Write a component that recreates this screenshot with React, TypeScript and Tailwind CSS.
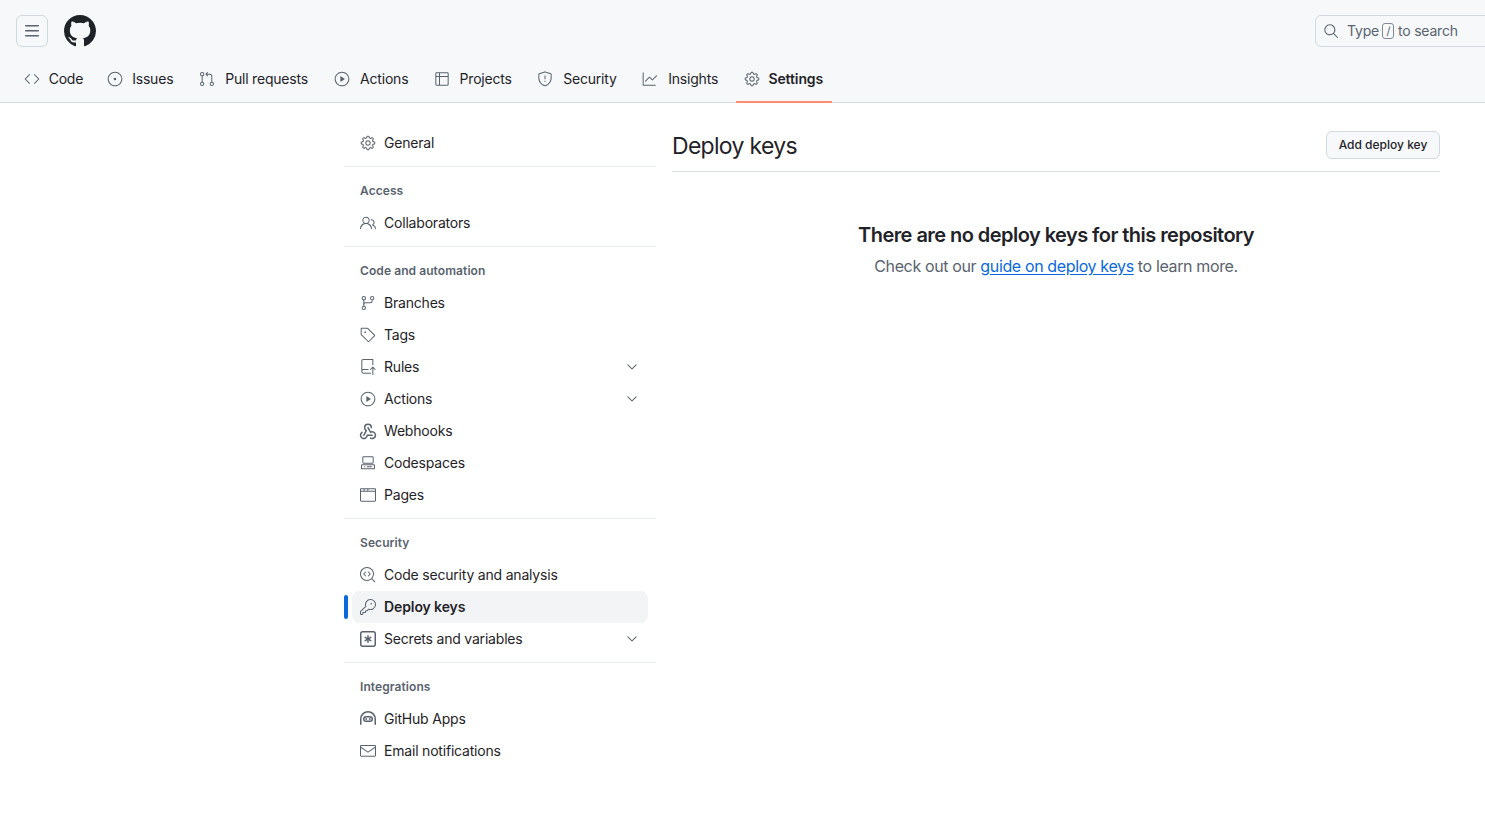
import type { ComponentType } from 'react';
import {
  GoBrowser,
  GoChevronDown,
  GoCode,
  GoCodescan,
  GoCodespaces,
  GoGear,
  GoGitBranch,
  GoGitPullRequest,
  GoGraph,
  GoIssueOpened,
  GoKey,
  GoMail,
  GoPeople,
  GoPlay,
  GoRepoPush,
  GoSearch,
  GoShield,
  GoTable,
  GoTag,
} from 'react-icons/go';
import { TbWebhook } from 'react-icons/tb';

type IconProps = { size?: number; className?: string };
type Icon = ComponentType<IconProps>;

type NavItem = { label: string; icon: Icon; chevron?: boolean; active?: boolean };
type NavGroup = { heading?: string; items: NavItem[] };

function MarkGithub({ size = 16, className }: IconProps) {
  return (
    <svg width={size} height={size} viewBox="0 0 16 16" fill="currentColor" className={className}>
      <path d="M8 0c4.42 0 8 3.58 8 8a8.013 8.013 0 0 1-5.45 7.59c-.4.08-.55-.17-.55-.38 0-.27.01-1.13.01-2.2 0-.75-.25-1.23-.54-1.48 1.78-.2 3.65-.88 3.65-3.95 0-.88-.31-1.59-.82-2.15.08-.2.36-1.02-.08-2.12 0 0-.67-.22-2.2.82-.64-.18-1.32-.27-2-.27-.68 0-1.36.09-2 .27-1.53-1.03-2.2-.82-2.2-.82-.44 1.1-.16 1.92-.08 2.12-.51.56-.82 1.28-.82 2.15 0 3.06 1.86 3.75 3.64 3.95-.23.2-.44.55-.51 1.07-.46.21-1.61.55-2.33-.66-.15-.24-.6-.83-1.23-.82-.67.01-.27.38.01.53.34.19.73.9.82 1.13.16.45.68 1.31 2.69.94 0 .67.01 1.3.01 1.49 0 .21-.15.45-.55.38A7.995 7.995 0 0 1 0 8c0-4.42 3.58-8 8-8Z" />
    </svg>
  );
}

function ThreeBars({ size = 16, className }: IconProps) {
  return (
    <svg width={size} height={size} viewBox="0 0 16 16" fill="currentColor" className={className}>
      <path d="M1 2.75A.75.75 0 0 1 1.75 2h12.5a.75.75 0 0 1 0 1.5H1.75A.75.75 0 0 1 1 2.75Zm0 5A.75.75 0 0 1 1.75 7h12.5a.75.75 0 0 1 0 1.5H1.75A.75.75 0 0 1 1 7.75ZM1.75 12h12.5a.75.75 0 0 1 0 1.5H1.75a.75.75 0 0 1 0-1.5Z" />
    </svg>
  );
}

function KeyAsterisk({ size = 16, className }: IconProps) {
  return (
    <svg width={size} height={size} viewBox="0 0 16 16" fill="currentColor" className={className}>
      <path d="M0 2.75A2.75 2.75 0 0 1 2.75 0h10.5A2.75 2.75 0 0 1 16 2.75v10.5A2.75 2.75 0 0 1 13.25 16H2.75A2.75 2.75 0 0 1 0 13.25ZM2.75 1.5c-.69 0-1.25.56-1.25 1.25v10.5c0 .69.56 1.25 1.25 1.25h10.5c.69 0 1.25-.56 1.25-1.25V2.75c0-.69-.56-1.25-1.25-1.25Z" />
      <path d="M8 4a.75.75 0 0 1 .75.75V6.7l1.69-.975a.75.75 0 0 1 .75 1.3L9.5 8l1.69.976a.75.75 0 0 1-.75 1.298L8.75 9.3v1.951a.75.75 0 0 1-1.5 0V9.299l-1.69.976a.75.75 0 0 1-.75-1.3L6.5 8l-1.69-.975a.75.75 0 0 1 .75-1.3l1.69.976V4.75A.75.75 0 0 1 8 4Z" />
    </svg>
  );
}

function Hubot({ size = 16, className }: IconProps) {
  return (
    <svg width={size} height={size} viewBox="0 0 16 16" fill="currentColor" className={className}>
      <path d="M0 8a8 8 0 1 1 16 0v5.25a.75.75 0 0 1-1.5 0V8a6.5 6.5 0 1 0-13 0v5.25a.75.75 0 0 1-1.5 0Z" />
      <path d="M3 8a3 3 0 0 1 3-3h4a3 3 0 1 1 0 6H6a3 3 0 0 1-3-3Zm3-1.5a1.5 1.5 0 1 0 0 3h4a1.5 1.5 0 0 0 0-3Z" />
      <circle cx="6.25" cy="8" r="0.9" />
      <circle cx="9.75" cy="8" r="0.9" />
    </svg>
  );
}

function Webhook({ className }: IconProps) {
  return <TbWebhook size={20} strokeWidth={1.8} className={`-m-0.5 ${className ?? ''}`} />;
}

const tabs: { label: string; icon: Icon; active?: boolean }[] = [
  { label: 'Code', icon: GoCode },
  { label: 'Issues', icon: GoIssueOpened },
  { label: 'Pull requests', icon: GoGitPullRequest },
  { label: 'Actions', icon: GoPlay },
  { label: 'Projects', icon: GoTable },
  { label: 'Security', icon: GoShield },
  { label: 'Insights', icon: GoGraph },
  { label: 'Settings', icon: GoGear, active: true },
];

const groups: NavGroup[] = [
  { items: [{ label: 'General', icon: GoGear }] },
  { heading: 'Access', items: [{ label: 'Collaborators', icon: GoPeople }] },
  {
    heading: 'Code and automation',
    items: [
      { label: 'Branches', icon: GoGitBranch },
      { label: 'Tags', icon: GoTag },
      { label: 'Rules', icon: GoRepoPush, chevron: true },
      { label: 'Actions', icon: GoPlay, chevron: true },
      { label: 'Webhooks', icon: Webhook },
      { label: 'Codespaces', icon: GoCodespaces },
      { label: 'Pages', icon: GoBrowser },
    ],
  },
  {
    heading: 'Security',
    items: [
      { label: 'Code security and analysis', icon: GoCodescan },
      { label: 'Deploy keys', icon: GoKey, active: true },
      { label: 'Secrets and variables', icon: KeyAsterisk, chevron: true },
    ],
  },
  {
    heading: 'Integrations',
    items: [
      { label: 'GitHub Apps', icon: Hubot },
      { label: 'Email notifications', icon: GoMail },
    ],
  },
];

function Header() {
  return (
    <header className="h-[103px] border-b border-[#d1d9e0] bg-[#f6f8fa]">
      <div className="flex h-[62px] items-center justify-between pl-4">
        <div className="flex items-center gap-4">
          <button className="flex h-8 w-8 items-center justify-center rounded-md border border-[#d1d9e0] text-[#59636e]">
            <ThreeBars size={16} />
          </button>
          <MarkGithub size={32} className="text-[#1f2328]" />
        </div>
        <div className="flex h-8 w-[200px] shrink-0 translate-x-[30px] items-center rounded-md border border-[#d1d9e0] pl-[7px] text-sm tracking-[-0.2px] text-[#59636e]">
          <GoSearch size={16} className="mr-2" />
          <span>Type</span>
          <span className="mx-[3.5px] flex h-4 w-3 items-center justify-center rounded-[3px] border border-[#818b98] text-[11px] leading-none">
            /
          </span>
          <span>to search</span>
        </div>
      </div>
      <nav className="flex h-10 gap-2 pl-4 pt-px">
        {tabs.map(({ label, icon: TabIcon, active }) => (
          <a
            key={label}
            className={`relative flex h-8 items-center gap-2 px-2 text-sm text-[#1f2328] first:-mr-px ${active ? 'font-semibold tracking-[-0.1px]' : 'tracking-[-0.2px]'}`}
          >
            <TabIcon size={16} className="text-[#59636e]" />
            {/* bold ghost keeps the tab width stable, same as the real underline nav */}
            <span
              data-content={label}
              className="text-center before:invisible before:block before:h-0 before:overflow-hidden before:font-semibold before:tracking-normal before:content-[attr(data-content)]"
            >
              {label}
            </span>
            {active && <span className="absolute -bottom-[8px] left-0 right-0 h-0.5 bg-[#fd8c73]" />}
          </a>
        ))}
      </nav>
    </header>
  );
}

function SideNav() {
  return (
    <aside className="w-[312px] shrink-0">
      {groups.map((group, index) => (
        <div key={group.heading ?? 'top'}>
          {index > 0 && <div className="mt-[7px] h-px bg-[#e8ebef]" />}
          {group.heading && (
            <h3 className="px-4 pb-2 pt-4 text-xs font-semibold leading-4 tracking-[0.08px] text-[#59636e]">
              {group.heading}
            </h3>
          )}
          <ul>
            {group.items.map(({ label, icon: ItemIcon, chevron, active }) => (
              <li key={label} className="relative">
                {active && <span className="absolute left-0 top-1 h-6 w-1 rounded-md bg-[#0969da]" />}
                <a
                  className={`mx-2 flex h-8 items-center gap-2 rounded-lg px-2 text-sm text-[#1f2328] ${active ? 'bg-[#f3f4f6] font-semibold tracking-[-0.1px]' : 'tracking-[-0.2px]'}`}
                >
                  <ItemIcon size={16} className="text-[#59636e]" />
                  <span className="flex-1">{label}</span>
                  {chevron && <GoChevronDown size={16} className="text-[#59636e]" />}
                </a>
              </li>
            ))}
          </ul>
        </div>
      ))}
    </aside>
  );
}

export default function App() {
  return (
    <div className="min-h-screen overflow-hidden bg-white text-[#1f2328] [font-family:Inter,sans-serif]">
      <Header />
      <div className="flex gap-4 pl-[344px] pr-[45px] pt-6">
        <SideNav />
        <main className="min-w-0 flex-1">
          <div className="flex h-[45px] items-start justify-between border-b border-[#d8dee4]">
            <h2 className="mt-0.5 text-[23px] font-normal leading-[34px] tracking-[-0.7px]">Deploy keys</h2>
            <button className="mt-1 h-7 w-[114px] rounded-md border border-[#d1d9e0] bg-[#f6f8fa] text-xs font-medium">
              Add deploy key
            </button>
          </div>
          <div className="pt-[49px] text-center">
            <h3 className="text-xl font-semibold leading-7 tracking-[-0.55px]">
              There are no deploy keys for this repository
            </h3>
            <p className="mt-[5px] text-base leading-6 tracking-[-0.37px] text-[#59636e]">
              Check out our{' '}
              <a className="text-[#0969da] underline underline-offset-2">guide on deploy keys</a> to learn more.
            </p>
          </div>
        </main>
      </div>
    </div>
  );
}
